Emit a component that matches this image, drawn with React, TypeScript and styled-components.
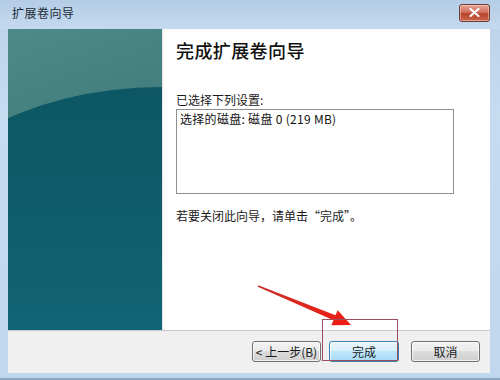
import React from "react";
import styled, { createGlobalStyle } from "styled-components";

const GlobalStyle = createGlobalStyle`
  html, body {
    margin: 0;
    padding: 0;
    background: #ffffff;
  }
  body {
    font-family: "Noto Sans CJK SC", "Liberation Sans", sans-serif;
    font-size: 12px;
    color: #1a1a1a;
  }
`;

const Window = styled.div`
  position: relative;
  width: 500px;
  height: 380px;
  box-sizing: border-box;
  display: flex;
  flex-direction: column;
  background: linear-gradient(180deg, #bad2ea 0%, #c5dbf0 30%, #c0d7ee 100%);
  border-bottom: 2px solid #8aa8c4;
  overflow: hidden;
`;

const TitleBar = styled.div`
  height: 29px;
  display: flex;
  align-items: center;
  justify-content: space-between;
  padding: 0 10px 0 12px;
  background: linear-gradient(180deg, #b4cde6 0%, #c4d9ee 100%);
`;

const Title = styled.span`
  font-size: 12px;
  color: #1e2a36;
  letter-spacing: 0.5px;
  margin-top: -4px;
`;

const CloseButton = styled.div`
  width: 29px;
  height: 16px;
  margin-top: -4px;
  display: flex;
  align-items: center;
  justify-content: center;
  border: 1px solid #6e3a34;
  border-radius: 3px;
  background: linear-gradient(180deg, #e8a494 0%, #d0725e 45%, #b8442c 55%, #c8664e 100%);
  box-shadow: inset 0 0 0 1px rgba(255, 220, 210, 0.5);
`;

const Frame = styled.div`
  flex: 1;
  margin: 0 10px 5px 8px;
  display: flex;
  flex-direction: column;
  background: #f0f0f0;
`;

const Body = styled.div`
  height: 301px;
  display: flex;
  border-bottom: 1px solid #c9c9c9;
`;

const SidePanel = styled.div`
  position: relative;
  width: 154px;
  flex-shrink: 0;
  overflow: hidden;
  background: linear-gradient(160deg, #4e8a8a 0%, #3c7878 50%, #2f6a70 100%);

  &::before {
    content: "";
    position: absolute;
    left: -97px;
    top: 58px;
    width: 500px;
    height: 300px;
    border-radius: 50%;
    background: linear-gradient(180deg, #0c5763 0%, #0f5e6c 50%, #13697a 100%);
  }
`;

const Content = styled.div`
  flex: 1;
  background: #ffffff;
  padding: 8px 0 0 14px;
  box-shadow: inset 2px 0 2px -1px rgba(0, 0, 0, 0.12);
`;

const Heading = styled.h1`
  margin: 0;
  font-size: 18px;
  line-height: 26px;
  font-weight: 500;
  color: #111111;
  letter-spacing: 0.4px;
`;

const Label = styled.div`
  margin-top: 29px;
  line-height: 16px;
  font-size: 12px;
  color: #1a1a1a;
`;

const ListBox = styled.div`
  width: 270px;
  height: 81px;
  margin-top: 1px;
  border: 1px solid #8e8f8f;
  padding: 1px 3px;
  font-size: 12px;
  line-height: 16px;
  color: #111111;
  letter-spacing: 0.3px;
`;

const Hint = styled.div`
  margin-top: 14px;
  line-height: 16px;
  font-size: 12px;
  color: #1a1a1a;
`;

const Footer = styled.div`
  flex: 1;
  display: flex;
  align-items: center;
  justify-content: flex-end;
  gap: 8px;
  padding: 0 10px 2px 0;
`;

const Button = styled.div<{ $primary?: boolean; $gapAfter?: number }>`
  width: ${(p) => (p.$primary ? 68 : 67)}px;
  height: 19px;
  margin-right: ${(p) => p.$gapAfter ?? 0}px;
  display: flex;
  align-items: center;
  justify-content: center;
  font-size: 12px;
  color: #1a1a1a;
  border-radius: 3px;
  border: 1px solid ${(p) => (p.$primary ? "#3c7fb1" : "#707070")};
  background: ${(p) =>
    p.$primary
      ? "linear-gradient(180deg, #eaf6fd 0%, #d9f0fc 45%, #bee6fd 50%, #a7d9f5 100%)"
      : "linear-gradient(180deg, #f2f2f2 0%, #ebebeb 45%, #dddddd 50%, #cfcfcf 100%)"};
  box-shadow: inset 0 0 0 1px rgba(255, 255, 255, 0.7);
`;

const Annotation = styled.svg`
  position: absolute;
  left: 0;
  top: 0;
  width: 500px;
  height: 380px;
  pointer-events: none;
`;

export default function App() {
  return (
    <>
      <GlobalStyle />
      <Window>
        <TitleBar>
          <Title>扩展卷向导</Title>
          <CloseButton>
            <svg width="11" height="9" viewBox="0 0 11 9">
              <path
                d="M1.5 1 L9.5 8 M9.5 1 L1.5 8"
                stroke="#ffffff"
                strokeWidth="2.2"
                strokeLinecap="round"
              />
            </svg>
          </CloseButton>
        </TitleBar>
        <Frame>
          <Body>
            <SidePanel />
            <Content>
              <Heading>完成扩展卷向导</Heading>
              <Label>已选择下列设置:</Label>
              <ListBox>选择的磁盘: 磁盘 0 (219 MB)</ListBox>
              <Hint>若要关闭此向导，请单击“完成”。</Hint>
            </Content>
          </Body>
          <Footer>
            <Button>&lt; 上一步(B)</Button>
            <Button $primary $gapAfter={4}>完成</Button>
            <Button>取消</Button>
          </Footer>
        </Frame>
        <Annotation viewBox="0 0 500 380">
          <defs>
            <linearGradient id="arrowFill" x1="0" y1="0" x2="1" y2="1">
              <stop offset="0" stopColor="#c8302a" />
              <stop offset="1" stopColor="#f01c14" />
            </linearGradient>
          </defs>
          <polygon
            points="258.3,285.2 335.5,315.3 337.7,310.3 351,325 331.3,325.3 333.5,320.3 257.7,286.8"
            fill="url(#arrowFill)"
          />
          <rect
            x="322.5"
            y="319.5"
            width="75"
            height="41"
            fill="none"
            stroke="#9a4c58"
            strokeWidth="1"
          />
        </Annotation>
      </Window>
    </>
  );
}
